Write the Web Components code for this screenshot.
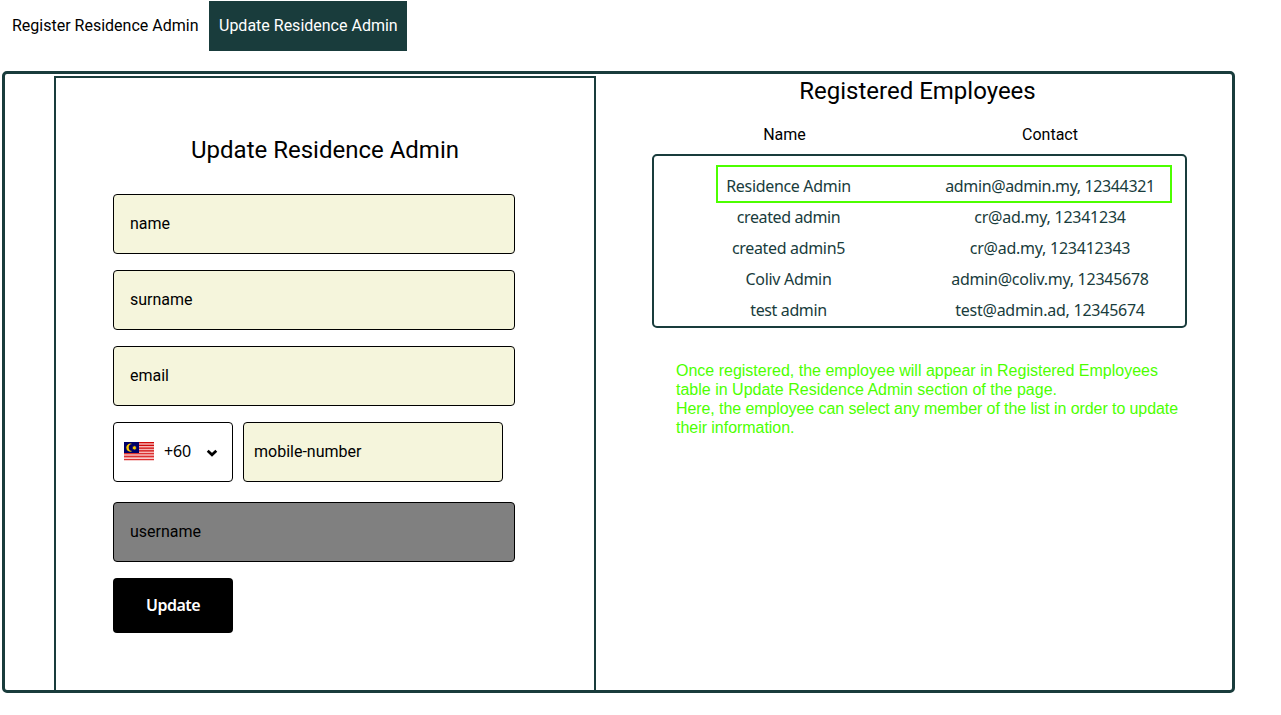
<!DOCTYPE html>
<html lang="en">
<head>
<meta charset="utf-8">
<title>Update Residence Admin</title>
<style>
html,body{margin:0;background:#fff;color:#000;font:16px/20px Roboto,sans-serif}
</style>
</head>
<body>
<admin-page></admin-page>
<script>
const define = (name, html, ready) => customElements.define(name, class extends HTMLElement {
  connectedCallback() {
    if (this.shadowRoot) return;
    this.attachShadow({mode: 'open'}).innerHTML = html;
    if (ready) ready.call(this, this.shadowRoot);
  }
});

/* Text run whose letter spacing is adjusted to a given advance width */
define('fit-text', `<style>:host{display:inline-block;white-space:nowrap}span{display:inline-block;white-space:nowrap}</style><span><slot></slot></span>`, function (root) {
  const span = root.querySelector('span'), w = +this.getAttribute('w');
  const natural = span.getBoundingClientRect().width;
  const n = this.textContent.length;
  span.style.letterSpacing = (w - natural) / n + 'px';
});

define('tab-item', `<style>
:host{display:flex;align-items:center;height:50px;padding:0 10px;box-sizing:border-box;width:198px;white-space:nowrap}
:host([active]){background:#193c3c;color:#fff}
</style><slot></slot>`);

define('form-field', `<style>
:host{display:flex;align-items:center;box-sizing:border-box;width:402px;height:60px;padding:0 16px;border:1px solid #000;border-radius:4px;background:beige;color:#000}
:host([disabled]){background:gray;color:#000}
:host([phone]){width:260px;padding:0 10px}
</style><slot></slot>`);

define('country-select', `<style>
:host{display:flex;align-items:center;box-sizing:border-box;width:120px;height:60px;padding:0 10px 2px;border:1px solid #000;border-radius:4px;background:#fff;font-family:"Noto Sans",sans-serif}
.code{margin-left:10px;width:27px}
.arrow{margin-left:15px;margin-top:3px}
svg{display:block}
</style>
<svg width="30" height="19" viewBox="0 0 30 19">
<rect width="30" height="19" fill="#fff"/>
<path fill="#f6b5b5" d="M15 0h15v11H15z"/>
<path fill="#cf0a0a" d="M15 0h15v1.36H15zM15 2.71h15v1.36H15zM15 5.43h15v1.36H15zM15 8.14h15v1.36H15z"/>
<path fill="#dd3030" d="M0 11h30v1.5H0zM0 13.6h30v2H0zM0 16.8h30v1.4H0z"/>
<rect width="15" height="11" fill="#000067"/>
<path fill="#fc0" d="M8.2 2.1A4 4 0 1 0 8.2 9.1A3.4 3.4 0 1 1 8.2 2.1z"/>
<path fill="#fc0" d="M10.4 3.5l.5 1.2 1.3-.5-.6 1.2 1.2.5-1.2.5.5 1.2-1.3-.5-.4 1.2-.5-1.2-1.2.5.5-1.2-1.2-.5 1.2-.5-.5-1.2 1.2.5z"/>
</svg>
<span class="code"><fit-text w="27">+60</fit-text></span>
<svg class="arrow" width="12" height="8" viewBox="0 0 12 8"><path d="M1.7 1.7L6 5.8l4.3-4.1" fill="none" stroke="#000" stroke-width="2.7"/></svg>`);

define('submit-button', `<style>
:host{display:flex;align-items:center;justify-content:center;box-sizing:border-box;width:120px;height:55px;padding:0 0 2px;border-radius:4px;background:#000;color:#fff;font:600 16px/20px "Noto Sans",sans-serif}
</style><fit-text w="54">Update</fit-text>`);

define('update-form', `<style>
:host{display:block;box-sizing:border-box;width:542px;height:640px;border:2px solid #193c3c;padding:56px 57px 0}
h2{margin:0 0 28px;font-size:24px;line-height:32px;font-weight:400;text-align:center}
.fields{display:flex;flex-direction:column;gap:16px}
.phone{display:flex;gap:10px;margin-bottom:4px}
</style>
<h2>Update Residence Admin</h2>
<div class="fields">
<form-field>name</form-field>
<form-field>surname</form-field>
<form-field>email</form-field>
<div class="phone"><country-select></country-select><form-field phone>mobile-number</form-field></div>
<form-field disabled>username</form-field>
<submit-button></submit-button>
</div>`);

define('employee-row', `<style>
:host{display:grid;grid-template-columns:145px 311px;box-sizing:border-box;width:456px;height:31px;margin-left:62px;align-items:center;text-align:center}
:host([selected]){height:38px;margin-bottom:-2px;outline:2px solid #4cff00;outline-offset:-2px;padding-top:4px}
.c{margin-left:67px}
</style><div><slot name="name"></slot></div><div class="c"><slot name="contact"></slot></div>`);

define('employee-list', `<style>
:host{display:block;width:535px}
h2{margin:0;font-size:24px;line-height:32px;font-weight:400;text-align:center;padding-right:4px}
.head{display:grid;grid-template-columns:265px 266px;margin-top:18px;text-align:center}
.box{box-sizing:border-box;width:535px;height:174px;margin-top:9px;padding-top:9px;border:2px solid #193c3c;border-radius:5px;color:#193c3c;font:16px/20px "Noto Sans",sans-serif}
.note{margin:33px 0 0 24px;color:#4cff00;font:16px/19px "Liberation Sans",Arial,sans-serif;white-space:nowrap}
.note fit-text{display:block}
</style>
<h2>Registered Employees</h2>
<div class="head"><span>Name</span><span>Contact</span></div>
<div class="box"></div>
<div class="note">
<fit-text w="482">Once registered, the employee will appear in Registered Employees</fit-text>
<fit-text w="381">table in Update Residence Admin section of the page.</fit-text>
<fit-text w="502">Here, the employee can select any member of the list in order to update</fit-text>
<fit-text w="118.5">their information.</fit-text>
</div>`, function (root) {
  const people = [
    ['Residence Admin', 124.5, 'admin@admin.my, 12344321', 209.5],
    ['created admin', 103.5, 'cr@ad.my, 12341234', 151.5],
    ['created admin5', 113, 'cr@ad.my, 123412343', 160.5],
    ['Coliv Admin', 86, 'admin@coliv.my, 12345678', 197.5],
    ['test admin', 76.5, 'test@admin.ad, 12345674', 189.5]
  ];
  root.querySelector('.box').innerHTML = people.map(([n, nw, c, cw], i) =>
    `<employee-row${i ? '' : ' selected'}><fit-text slot="name" w="${nw}">${n}</fit-text><fit-text slot="contact" w="${cw}">${c}</fit-text></employee-row>`).join('');
});

define('admin-page', `<style>
:host{display:block;height:715px;overflow:hidden}
nav{display:flex;gap:9px;padding:1px 0 0 2px}
main{display:flex;box-sizing:border-box;width:1233px;height:622px;margin:20px 0 0 2px;border:3px solid #193c3c;border-radius:5px;overflow:hidden}
update-form{margin:2px 56px 0 49px;flex:none}
employee-list{margin-top:1px;flex:none}
</style>
<nav><tab-item>Register Residence Admin</tab-item><tab-item active>Update Residence Admin</tab-item></nav>
<main><update-form></update-form><employee-list></employee-list></main>`);
</script>
</body>
</html>
